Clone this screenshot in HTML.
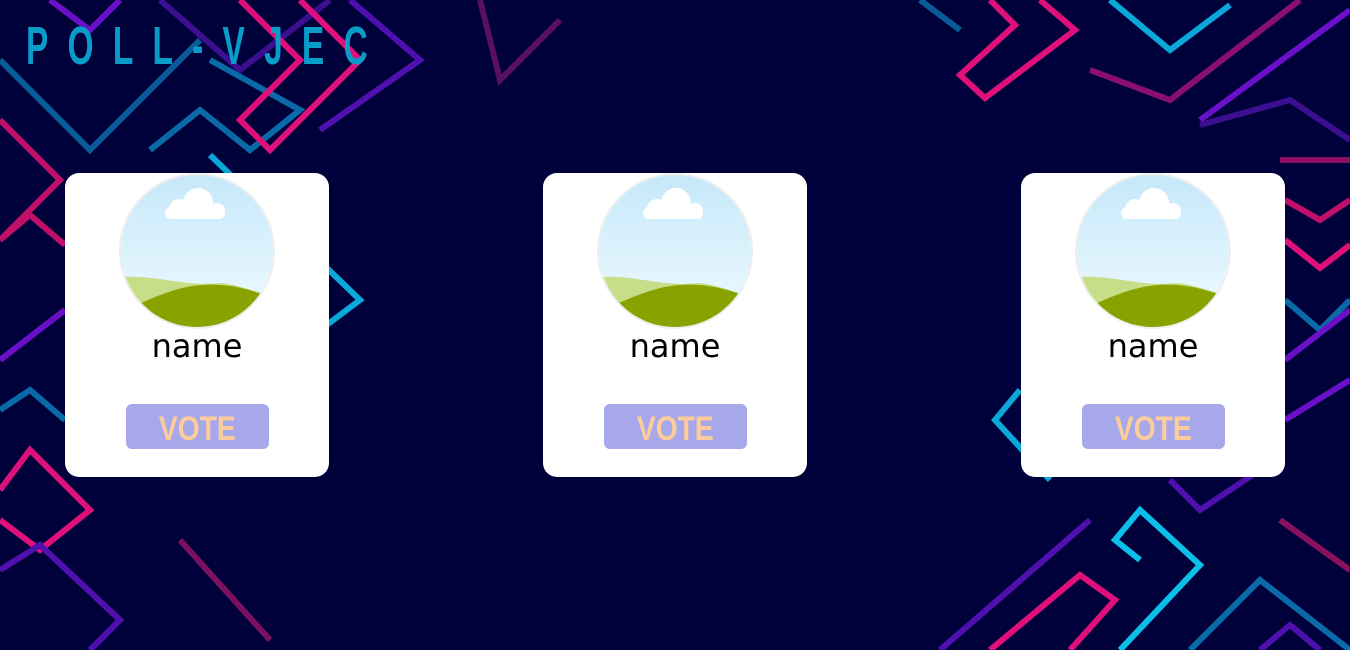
<!DOCTYPE html>
<html><head><style>
html,body{margin:0;padding:0}
body{width:1350px;height:650px;background:#00003a;position:relative;overflow:hidden;font-family:"Liberation Sans",sans-serif}
svg.bg{position:absolute;left:0;top:0}
.title{position:absolute;left:26px;top:15px;color:#0a9cc8;font-weight:bold;font-size:54px;letter-spacing:31px;transform:scaleX(0.62);transform-origin:left top;white-space:nowrap}
.card{position:absolute;top:173px;width:264px;height:304px;background:#fff;border-radius:14px}
.pic{position:absolute;left:56px;top:2px;width:152px;height:152px;border-radius:50%;overflow:hidden;box-shadow:0 0 0 2px #eee}
.name{position:absolute;top:154px;width:100%;text-align:center;font-size:32px;color:#000;font-family:"DejaVu Sans",sans-serif}
.vote{position:absolute;left:61px;top:231px;width:143px;height:45px;background:#a7a8ea;border-radius:6px;text-align:center;line-height:50px;color:#fccc9c;font-weight:bold;font-size:34px}
.vote span{display:inline-block;transform:scaleX(0.83)}
</style></head><body>
<svg class="bg" width="1350" height="650" fill="none" stroke-width="6" stroke-linejoin="miter">
<polyline points="0,60 90,150 200,40" stroke="#0a5c98"/>
<polyline points="50,0 90,30 120,0" stroke="#6a10c8"/>
<polyline points="0,120 60,180 0,240" stroke="#c0106a"/>
<polyline points="160,0 240,70 330,0" stroke="#3a1090"/>
<polyline points="150,150 200,110 250,150 300,110 210,60" stroke="#0a6aa8"/>
<polyline points="240,0 300,60 240,120 270,150 360,60 300,0" stroke="#e0107a"/>
<polyline points="320,130 420,60 350,0" stroke="#5010b0"/>
<polyline points="210,155 360,300 320,330" stroke="#0aa8d8"/>
<polyline points="0,240 30,215 65,245" stroke="#c0106a"/>
<polyline points="0,360 65,310" stroke="#6a10c8"/>
<polyline points="0,410 30,390 65,420" stroke="#0a6aa8"/>
<polyline points="0,490 30,450 90,510 40,550 0,520" stroke="#e0107a"/>
<polyline points="0,570 40,545 120,620 90,650" stroke="#5010b0"/>
<polyline points="180,540 270,640" stroke="#7a1060"/>
<polyline points="480,0 500,80 560,20" stroke="#5a1060"/>
<polyline points="920,0 960,30" stroke="#0a5c98"/>
<polyline points="990,0 1015,25 960,75 985,98 1075,30 1040,0" stroke="#e0107a"/>
<polyline points="1110,0 1170,50 1230,5" stroke="#0aa8d8"/>
<polyline points="1090,70 1170,100 1300,0" stroke="#8a1070"/>
<polyline points="1200,120 1350,10" stroke="#6a10c8"/>
<polyline points="1200,125 1290,100 1350,140" stroke="#3a1090"/>
<polyline points="1280,160 1350,160" stroke="#8a1060"/>
<polyline points="1285,200 1320,220 1350,200" stroke="#c0106a"/>
<polyline points="1285,240 1320,268 1350,245" stroke="#e0107a"/>
<polyline points="1285,300 1320,330 1350,300" stroke="#0a6aa8"/>
<polyline points="1285,360 1350,310" stroke="#6a10c8"/>
<polyline points="1285,420 1350,380" stroke="#6a10c8"/>
<polyline points="1020,390 995,420 1050,480" stroke="#0aa8d8"/>
<polyline points="1170,480 1200,510 1260,470" stroke="#5010b0"/>
<polyline points="940,650 1090,520" stroke="#5010b0"/>
<polyline points="1140,560 1115,540 1140,510 1200,565 1120,650" stroke="#0ac0e8"/>
<polyline points="990,650 1080,575 1115,600 1070,650" stroke="#e0107a"/>
<polyline points="1190,650 1260,580 1350,650" stroke="#0a6aa8"/>
<polyline points="1280,520 1350,570" stroke="#8a1060"/>
<polyline points="1260,650 1290,625 1320,650" stroke="#5010b0"/>
</svg>
<svg width="0" height="0" style="position:absolute"><defs><linearGradient id="s" x1="0" y1="0" x2="0" y2="1"><stop offset="0" stop-color="#c6e8fa"/><stop offset="1" stop-color="#f0fbff"/></linearGradient>
<g id="scene"><rect width="152" height="152" fill="url(#s)"/><g fill="#fff"><circle cx="58" cy="34" r="10"/><circle cx="77" cy="28" r="15"/><circle cx="96" cy="36" r="8"/><rect x="44" y="32" width="60" height="12" rx="6"/></g><path d="M0,102 C40,100 60,112 100,108 C120,110 135,118 152,120 V152 H0Z" fill="#c6de88"/><path d="M20,128 C50,115 70,108 100,110 C125,112 135,118 152,122 V152 H0Z" fill="#8aa200"/></g></defs></svg>
<div class="title">POLL-VJEC</div>

<div class="card" style="left:65px">
 <div class="pic"><svg width="152" height="152"><use href="#scene"/></svg></div>
 <div class="name">name</div><div class="vote"><span>VOTE</span></div>
</div>
<div class="card" style="left:543px">
 <div class="pic"><svg width="152" height="152"><use href="#scene"/></svg></div>
 <div class="name">name</div><div class="vote"><span>VOTE</span></div>
</div>
<div class="card" style="left:1021px">
 <div class="pic"><svg width="152" height="152"><use href="#scene"/></svg></div>
 <div class="name">name</div><div class="vote"><span>VOTE</span></div>
</div>
</body></html>
